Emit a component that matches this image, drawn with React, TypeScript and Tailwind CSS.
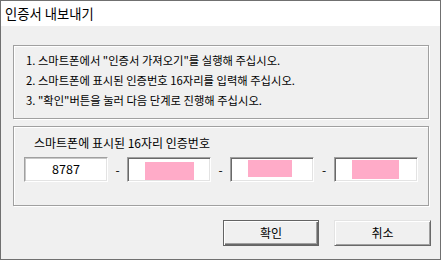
export default function App() {
  const inputBase =
    "w-[84px] h-[25px] bg-white border border-t-[#a0a0a0] border-l-[#a0a0a0] border-r-white border-b-white";
  return (
    <div className="w-[441px] h-[260px] border border-[#707070] bg-[#f0f0f0] flex flex-col text-black font-['Noto_Sans_CJK_KR','Noto_Sans',sans-serif]">
      <div className="h-[25px] bg-white flex items-center pl-[4px] text-[13.3px] shrink-0">인증서 내보내기</div>
      <div className="flex-1 pt-[19px] pl-[12px] pr-[11px] flex flex-col">
        <div className="h-[74px] border border-[#a0a0a0] shadow-[inset_1px_1px_0_#fff,1px_1px_0_#fff] pl-[12px] pt-[4px] flex flex-col text-[11.3px] leading-[20px]">
          <div className="h-[20px]">1. 스마트폰에서 "인증서 가져오기"를 실행해 주십시오.</div>
          <div className="h-[20px]">2. 스마트폰에 표시된 인증번호 16자리를 입력해 주십시오.</div>
          <div className="h-[20px]">3. "확인"버튼을 눌러 다음 단계로 진행해 주십시오.</div>
        </div>
        <div className="mt-[7px] h-[80px] border border-[#a0a0a0] shadow-[inset_1px_1px_0_#fff,1px_1px_0_#fff] pl-[10px] pt-[8px] flex flex-col">
          <div className="ml-[10px] leading-[16px] h-[16px] text-[12px]">스마트폰에 표시된 16자리 인증번호</div>
          <div className="mt-[6px] flex items-center">
            <div className={`${inputBase} shadow-[inset_1px_1px_0_#c8c8c8,inset_-1px_-1px_0_#e3e3e3] flex items-center justify-center text-[12.5px]`}>8787</div>
            <div className="w-[19px] text-center text-[12px]">-</div>
            <div className={`${inputBase} shadow-[inset_1px_1px_0_#696969,inset_-1px_-1px_0_#e3e3e3] pl-[17px] pt-[4px]`}>
              <div className="w-[49px] h-[18px] bg-[#ffabc8]" />
            </div>
            <div className="w-[19px] text-center text-[12px]">-</div>
            <div className={`${inputBase} shadow-[inset_1px_1px_0_#696969,inset_-1px_-1px_0_#e3e3e3] pl-[17px] pt-[2px]`}>
              <div className="w-[44px] h-[17px] bg-[#ffabc8]" />
            </div>
            <div className="w-[20px] text-center text-[12px]">-</div>
            <div className={`${inputBase} shadow-[inset_1px_1px_0_#696969,inset_-1px_-1px_0_#e3e3e3] pl-[17px] pt-[2px]`}>
              <div className="w-[47px] h-[19px] bg-[#ffabc8]" />
            </div>
          </div>
        </div>
        <div className="mt-[14px] flex justify-end gap-[15px] mr-[-2px] text-[12px]">
          <button className="w-[96px] h-[26px] bg-[#f0f0f0] border border-[#646464] shadow-[inset_1px_1px_0_#fff,inset_-1px_-1px_0_#696969,inset_-2px_-2px_0_#a0a0a0] flex items-center justify-center">확인</button>
          <button className="w-[97px] h-[26px] bg-[#f0f0f0] border border-t-[#e3e3e3] border-l-[#e3e3e3] border-r-[#696969] border-b-[#696969] shadow-[inset_1px_1px_0_#fff,inset_-1px_-1px_0_#a0a0a0] flex items-center justify-center">취소</button>
        </div>
      </div>
    </div>
  );
}
